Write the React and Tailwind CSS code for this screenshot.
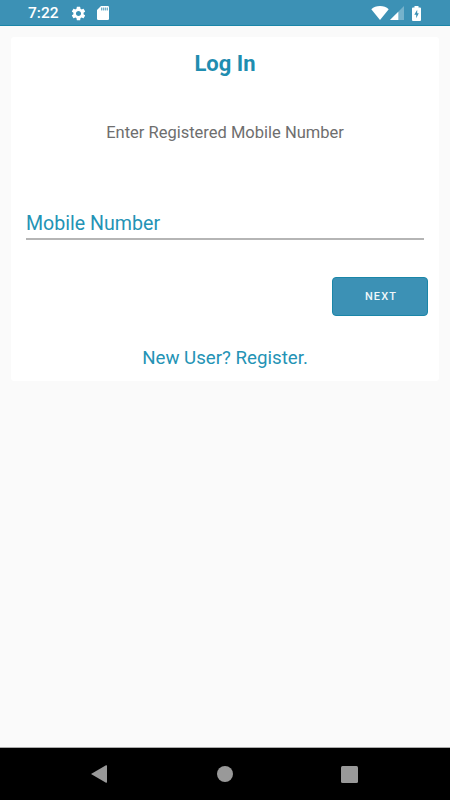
import { useState } from 'react';
import { MdSettings } from 'react-icons/md';

function SdCardIcon() {
  return (
    <svg className="w-3 h-[14px]" viewBox="0 0 12 14">
      <path d="M4 0h6.7Q12 0 12 1.3v11.4Q12 14 10.7 14H1.3Q0 14 0 12.7V4z" fill="#fff" />
      <path d="M4.500 1.600v2.800M6.500 1.600v2.800M8.500 1.600v2.800M10.500 1.600v2.800" stroke="#3c91b5" strokeWidth="1" opacity="0.6" />
      <path d="M4 1.600h7v2.800H4z" fill="#3c91b5" opacity="0.3" />
    </svg>
  );
}

function WifiIcon() {
  return (
    <svg className="w-[18px] h-[14px]" viewBox="0 0 18 14">
      <path d="M9 14 .3 3.200C2.500 1 5.600 0 9 0s6.500 1 8.700 3.200z" fill="#fff" />
    </svg>
  );
}

function SignalIcon() {
  return (
    <svg className="w-[14px] h-[14px]" viewBox="0 0 14 14">
      <path d="M0 14 14 0v14z" fill="#fff" opacity="0.3" />
      <path d="M0 14 8.300 5.700V14z" fill="#fff" />
    </svg>
  );
}

function BatteryIcon() {
  return (
    <svg className="w-[9px] h-[15px]" viewBox="0 0 9 15">
      <path d="M2.500 0h4v1.400H8q1 0 1 1V14q0 1-1 1H1q-1 0-1-1V2.400q0-1 1-1h1.500z" fill="#fff" />
      <path d="M5.200 3.800 2.300 8.700h1.900v3.500L6.800 7.300H5.200z" fill="#3c91b5" />
    </svg>
  );
}

function StatusBar() {
  return (
    <div className="h-[26px] shrink-0 bg-[#3c91b5] border-b border-[#1a86a8] flex items-center justify-between pl-[28px] pr-[29px] text-white">
      <div className="flex items-center pt-px">
        <span className="w-[42px] pt-0.5 text-[15.500px] leading-none font-medium">7:22</span>
        <MdSettings className="w-[17px] h-[17px] mr-[10px]" />
        <SdCardIcon />
      </div>
      <div className="flex items-center pt-px">
        <WifiIcon />
        <span className="w-px" />
        <SignalIcon />
        <span className="w-2" />
        <BatteryIcon />
      </div>
    </div>
  );
}

function NavBar() {
  return (
    <div className="h-[53px] shrink-0 bg-black border-t border-[#aaa] flex items-center justify-between pl-[91px] pr-[92px]">
      <button type="button" aria-label="Back">
        <svg className="w-4 h-[18px]" viewBox="0 0 16 18"><path d="M0 9 15 .3q1-.3 1 .7v16q0 1-1 .7z" fill="#999" /></svg>
      </button>
      <button type="button" aria-label="Home" className="ml-0.5 w-4 h-4 rounded-full bg-[#999]" />
      <button type="button" aria-label="Recent apps" className="w-[17px] h-[17px] rounded-[1.500px] bg-[#999]" />
    </div>
  );
}

export default function App() {
  const [mobile, setMobile] = useState('');

  return (
    <div className="w-full h-screen flex flex-col bg-[#fafafa] font-['Roboto',sans-serif]">
      <StatusBar />

      <main className="flex-1 px-[11px] pt-[11px]">
        <form onSubmit={(e) => e.preventDefault()} className="h-[344px] bg-white rounded-[3px] flex flex-col">
          <h1 className="mt-[14px] text-center text-[22px] leading-[26px] font-bold text-[#1f8db0]">Log In</h1>
          <p className="mt-[45px] text-center text-[16.500px] leading-[22px] text-[#6e6e6e]">Enter Registered Mobile Number</p>

          <input
            type="tel"
            value={mobile}
            onChange={(e) => setMobile(e.target.value)}
            placeholder="Mobile Number"
            className="mt-[63px] mx-[15px] h-[33px] pt-0.5 border-b-2 border-[#b5b5b5] text-[19.600px] text-[#2493b5] placeholder:text-[#2493b5] outline-none"
          />

          <button type="submit" className="mt-[37px] mr-[11px] self-end w-24 h-[39px] pt-0.5 pl-0.5 rounded border border-[#1a86a8] bg-[#3c91b5] text-[11px] font-medium tracking-[1.100px] text-[#f0f7fa]">
            NEXT
          </button>

          <a href="#register" className="mt-[29px] text-center text-[18.700px] leading-[26px] text-[#2493b5]">New User? Register.</a>
        </form>
      </main>

      <NavBar />
    </div>
  );
}
